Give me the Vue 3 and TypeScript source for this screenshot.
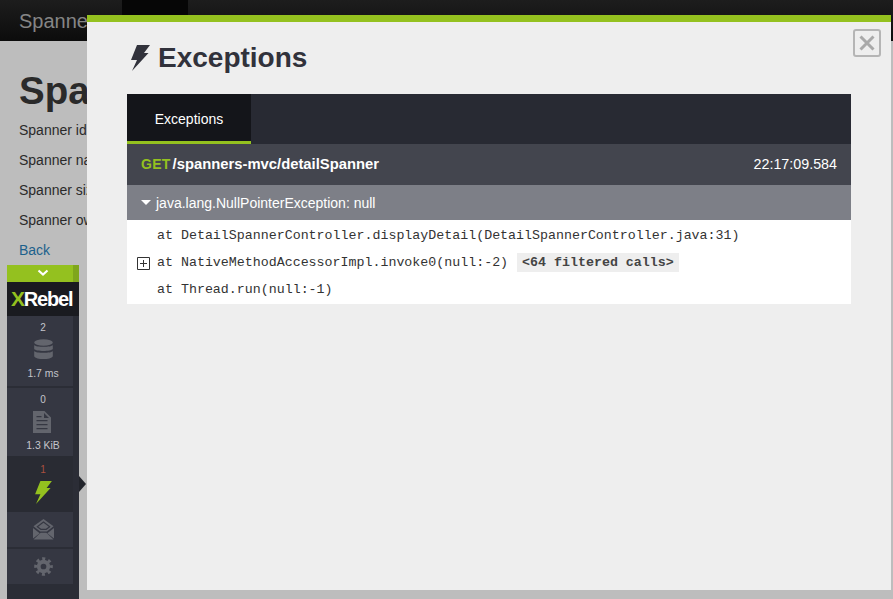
<script setup lang="ts">
const fields: string[] = ['Spanner id', 'Spanner name', 'Spanner size', 'Spanner owner']
const frames = [
  { text: 'at DetailSpannerController.displayDetail(DetailSpannerController.java:31)', filtered: 0 },
  { text: 'at NativeMethodAccessorImpl.invoke0(null:-2)', filtered: 64 },
  { text: 'at Thread.run(null:-1)', filtered: 0 },
]
</script>

<template>
  <div class="page">
    <header class="navbar">
      <span class="brand">Spanners</span>
      <span class="nav-active"></span>
    </header>
    <main class="content">
      <h1>Spanner</h1>
      <p v-for="f in fields" :key="f">{{ f }}</p>
      <a class="back">Back</a>
    </main>

    <aside class="toolbar">
      <div class="collapse">
        <svg width="14" height="8" viewBox="0 0 14 8"><path d="M2.500 1.500 L7 5.500 L11.500 1.500" fill="none" stroke="#fff" stroke-width="2.200" /></svg>
      </div>
      <div class="logo"><span class="x">X</span><span class="rebel">Rebel</span></div>
      <div class="items">
        <div class="item tall">
          <span class="count">2</span>
          <svg class="db" width="19" height="21" viewBox="0 0 20 22" fill="#63656d">
            <ellipse cx="10" cy="3.600" rx="9.800" ry="3.400" />
            <path d="M.2 6.200C2 8.800 18 8.800 19.800 6.200V10.500C18 13.200 2 13.200 .2 10.500Z" />
            <path d="M.2 12.600C2 15.200 18 15.200 19.800 12.600V18C18 22 2 22 .2 18Z" />
          </svg>
          <span class="metric">1.7 ms</span>
        </div>
        <div class="item tall second">
          <span class="count">0</span>
          <svg class="doc" width="18" height="22" viewBox="0 0 18 22" fill="#63656d">
            <path fill-rule="evenodd" d="M0 0H11.500L18 6.500V22H0ZM3.500 9V10.200H14.500V9ZM3.500 13V14.200H14.500V13ZM3.500 17V18.200H14.500V17ZM3.500 5V6.200H8.500V5ZM11 2V7H16Z" />
          </svg>
          <span class="metric">1.3 KiB</span>
        </div>
        <div class="item active">
          <span class="count red">1</span>
          <svg width="17" height="23" viewBox="0 0 19 26" fill="#94c11f">
            <path d="M6 0H19L13 8H17.500L1 26L6 15H0Z" />
          </svg>
        </div>
        <div class="item icon-only">
          <svg width="21" height="21" viewBox="0 0 22 22" fill="#63656d">
            <path d="M11 0L21.500 7.600L14.500 13.200H7.500L.5 7.600Z" />
            <path fill="#353742" d="M11 2.400L18.500 8L14 11.500H8L3.500 8Z" />
            <path d="M11 4L16.500 8L13.500 10.300H8.500L5.500 8Z" />
            <path d="M0 9.500L7 15L0 20.500ZM22 9.500L15 15L22 20.500ZM8 14.500H14L21.500 21.500H.5Z" />
          </svg>
        </div>
        <div class="item icon-only gear">
          <svg width="19" height="19" viewBox="0 0 20 20" fill="none" stroke="#63656d">
            <circle cx="10" cy="10" r="5" stroke-width="4" />
            <circle cx="10" cy="10" r="8" stroke-width="3.600" stroke-dasharray="3.140 3.140" stroke-dashoffset="1.570" />
          </svg>
        </div>
      </div>
    </aside>
    <span class="pointer"></span>

    <section class="modal">
      <button class="close" aria-label="Close">
        <svg width="18" height="18" viewBox="0 0 18 18"><path d="M2.500 2.500L15.500 15.500M15.500 2.500L2.500 15.500" stroke="#a9a9a9" stroke-width="3" /></svg>
      </button>
      <h2>
        <svg width="19" height="26" viewBox="0 0 19 26" fill="#31323b">
          <path d="M6 0H19L13 8H17.500L1 26L6 15H0Z" />
        </svg>
        Exceptions
      </h2>
      <div class="panel">
        <nav class="tabs"><span class="tab">Exceptions</span></nav>
        <div class="request">
          <span><b class="method">GET</b> <b class="url">/spanners-mvc/detailSpanner</b></span>
          <span class="time">22:17:09.584</span>
        </div>
        <div class="exception">
          <svg width="10" height="5" viewBox="0 0 10 5"><path d="M0 0H10L5 5Z" fill="#fff" /></svg>
          java.lang.NullPointerException: null
        </div>
        <div class="stack">
          <div v-for="fr in frames" :key="fr.text" class="frame">
            <span v-if="fr.filtered" class="expand">
              <svg width="13" height="13" viewBox="0 0 13 13"><path d="M.5 .5H12.500V12.500H.5ZM6.500 3V10M3 6.500H10" fill="none" stroke="#333" /></svg>
            </span>
            <span>{{ fr.text }}</span>
            <span v-if="fr.filtered" class="filtered">&lt;{{ fr.filtered }} filtered calls&gt;</span>
          </div>
        </div>
      </div>
    </section>
  </div>
</template>

<style scoped>
.page {
  position: relative;
  width: 893px;
  height: 599px;
  overflow: hidden;
  background: #bdbdbd;
  font-family: "Liberation Sans", Arial, sans-serif;
  color: #2a2a2a;
}
.navbar {
  height: 41px;
  display: flex;
  background: linear-gradient(#1d1d1d, #0c0c0c);
  box-sizing: border-box;
  padding-left: 19px;
}
.brand {
  width: 103px;
  font-size: 20px;
  line-height: 43px;
  color: #858585;
}
.nav-active {
  width: 66px;
  background: #060606;
}
.content {
  padding: 0 19px;
  font-size: 14px;
}
.content h1 {
  margin: 27px 0 0;
  font-size: 38.500px;
  line-height: 45px;
  font-weight: 700;
  color: #2a2a2a;
}
.content p {
  margin: 0 0 10px;
  line-height: 20px;
}
.content h1 + p {
  margin-top: 7px;
}
.back {
  line-height: 20px;
  color: #1c618c;
}
.toolbar {
  position: absolute;
  left: 7px;
  top: 265px;
  bottom: 0;
  width: 72px;
  display: flex;
  flex-direction: column;
  background: #2b2d36;
  color: #c4c5cb;
  font-size: 11px;
}
.collapse {
  height: 17px;
  display: flex;
  justify-content: center;
  padding-top: 4px;
  box-sizing: border-box;
  background: linear-gradient(to right, #94c11f 66px, #7fa61c 66px);
}
.logo {
  height: 34px;
  background: #1a1b20;
  font-size: 20px;
  font-weight: 700;
  line-height: 34px;
  letter-spacing: -1.200px;
  padding-left: 4px;
  white-space: nowrap;
}
.x {
  color: #94c11f;
  font-size: 21px;
}
.rebel {
  color: #fff;
}
.items {
  width: 66px;
  display: flex;
  flex-direction: column;
}
.item {
  display: flex;
  flex-direction: column;
  align-items: center;
  padding-left: 6px;
  box-sizing: border-box;
  background: #353742;
}
.tall {
  height: 70px;
  padding-top: 6px;
}
.second {
  height: 68px;
  margin-top: 2px;
}
.count {
  font-size: 10px;
  line-height: 12px;
  margin-bottom: 5px;
}
.metric {
  margin-top: 7px;
  font-size: 10.400px;
  line-height: 13px;
}
.doc {
  margin-top: 0;
  margin-left: -2px;
  margin-bottom: -1px;
}
.active {
  height: 56px;
  padding-top: 8px;
  background: #292b33;
}
.active .count {
  margin-bottom: 5px;
}
.red {
  color: #a9503f;
}
.icon-only {
  height: 35px;
  justify-content: center;
}
.gear {
  margin-top: 2px;
}
.pointer {
  position: absolute;
  left: 79px;
  top: 476px;
  border-left: 7px solid #22242b;
  border-top: 8px solid transparent;
  border-bottom: 8px solid transparent;
}
.modal {
  position: absolute;
  left: 87px;
  top: 15px;
  width: 804px;
  height: 575px;
  box-sizing: border-box;
  border-top: 7px solid #94c11f;
  background: #eeeeee;
  padding: 0 40px;
}
.close {
  position: absolute;
  top: 7px;
  right: 10px;
  width: 28px;
  height: 28px;
  padding: 0;
  display: flex;
  align-items: center;
  justify-content: center;
  background: transparent;
  border: 2px solid #b5b5b5;
  border-radius: 3px;
}
.modal h2 {
  margin: 0;
  height: 72px;
  display: flex;
  align-items: center;
  gap: 8px;
  padding-left: 4px;
  box-sizing: border-box;
  padding-bottom: 1px;
  font-size: 28px;
  font-weight: 700;
  color: #31323b;
}
.panel {
  width: 724px;
}
.tabs {
  height: 50px;
  display: flex;
  background: #282a33;
}
.tab {
  width: 124px;
  box-sizing: border-box;
  border-bottom: 3px solid #94c11f;
  background: #14151a;
  color: #fff;
  font-size: 14px;
  line-height: 50px;
  text-align: center;
}
.request {
  height: 41px;
  display: flex;
  align-items: center;
  justify-content: space-between;
  padding: 0 14px 2px;
  box-sizing: border-box;
  background: #43454e;
  color: #fff;
  font-size: 14px;
}
.method {
  color: #94c11f;
  letter-spacing: .3px;
}
.url {
  margin-left: -2px;
  font-size: 14.800px;
}
.time {
  font-size: 14.300px;
}
.exception {
  height: 35px;
  display: flex;
  align-items: center;
  gap: 5px;
  padding-left: 14px;
  background: #7d7f87;
  color: #fff;
  font-size: 14px;
}
.stack {
  height: 84px;
  box-sizing: border-box;
  padding-top: 2px;
  background: #fff;
  font-family: "Liberation Mono", "Courier New", monospace;
  font-size: 13.300px;
  color: #333;
}
.frame {
  position: relative;
  height: 27px;
  line-height: 27px;
  padding-left: 30px;
  white-space: pre;
}
.expand {
  position: absolute;
  left: 10px;
  top: 8px;
  display: flex;
}
.filtered {
  margin-left: 9px;
  padding: 2px 5px;
  background: #eeeeee;
  font-weight: 700;
  color: #444;
}
</style>
